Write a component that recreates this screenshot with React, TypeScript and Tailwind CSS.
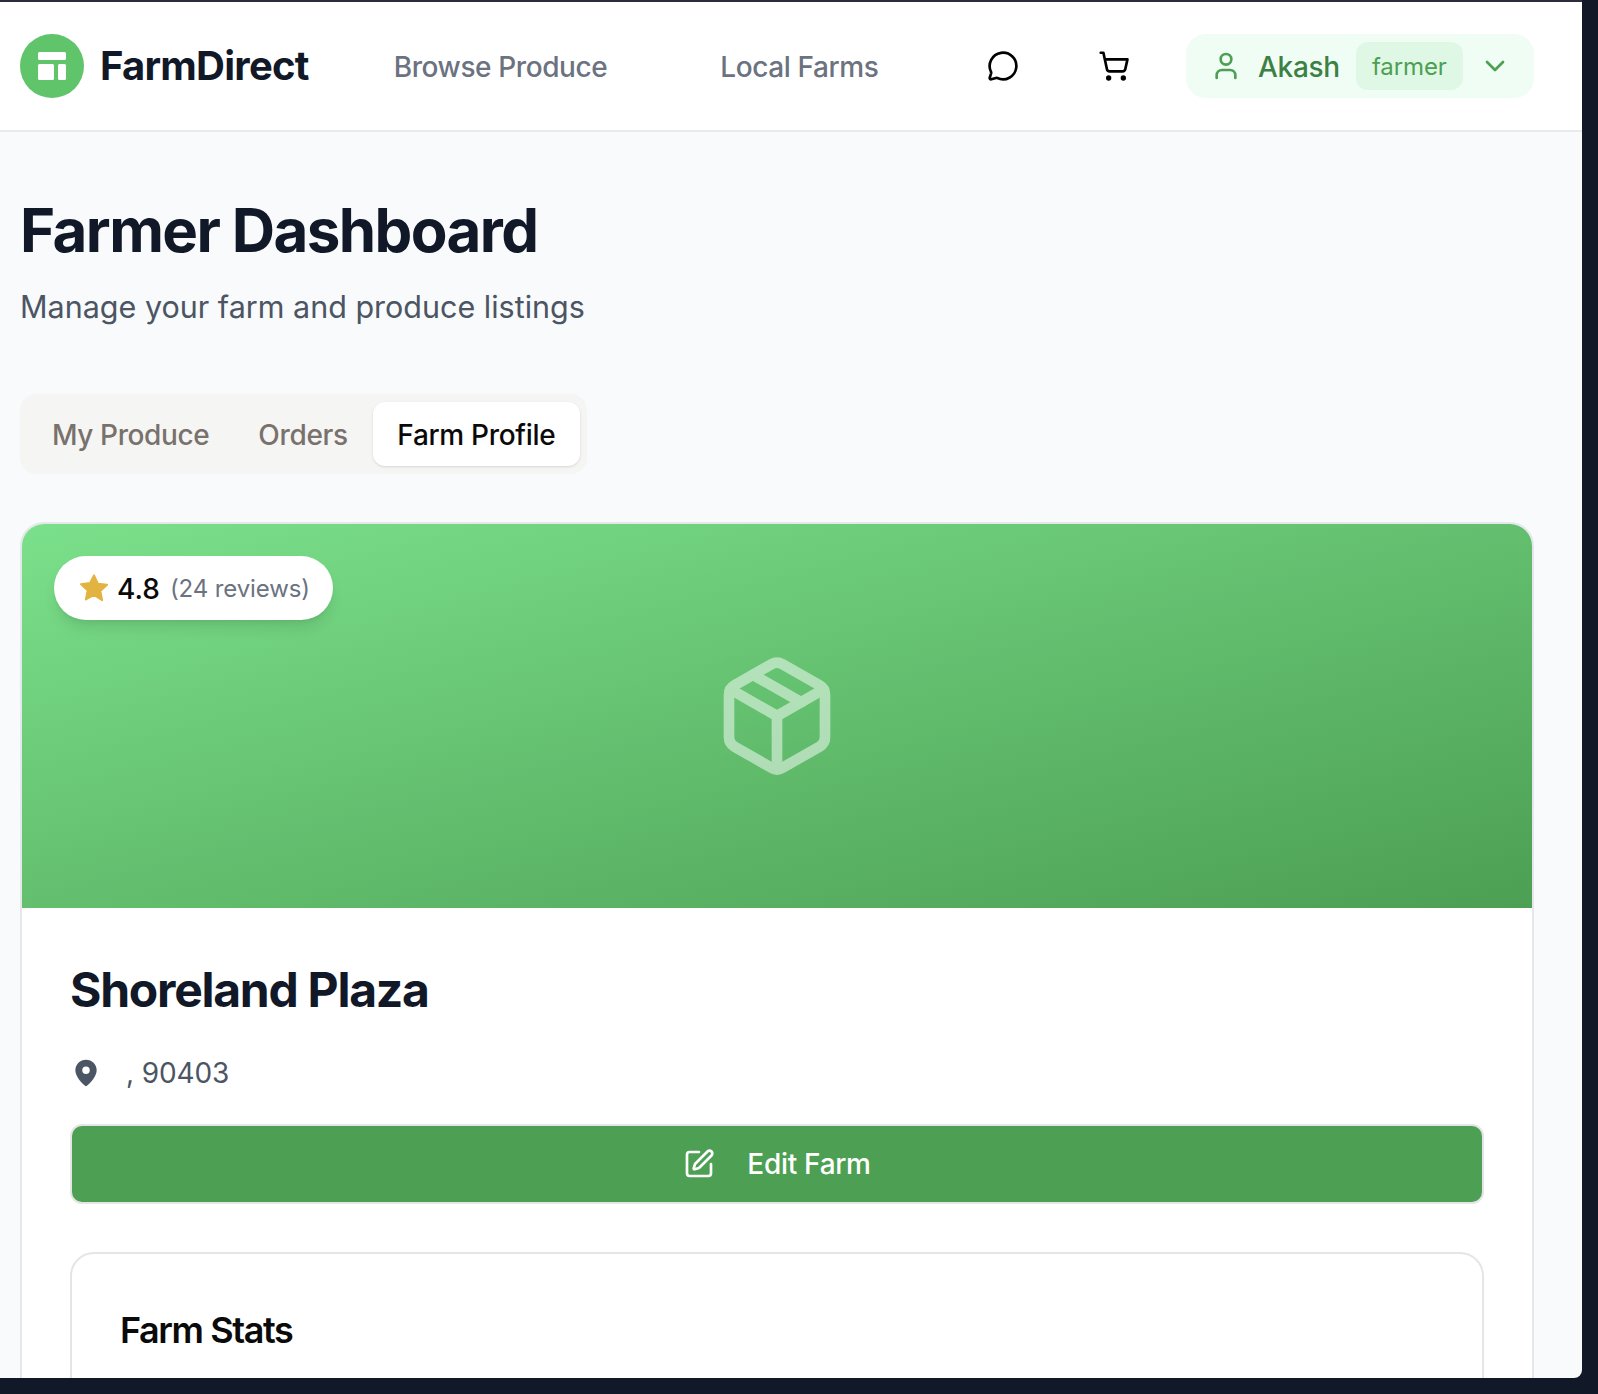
import React from 'react';
import { ChevronDown, MessageCircle, Package, ShoppingCart, SquarePen, User } from 'lucide-react';

const LogoMark = () => (
    <svg width="30" height="30" viewBox="0 0 30 30" fill="white">
        <rect x="1" y="1" width="28" height="8" rx="1.5" />
        <rect x="1" y="13" width="16" height="16" rx="1.5" />
        <rect x="21" y="13" width="8" height="16" rx="1.5" />
    </svg>
);

const Star = () => (
    <svg width="32" height="32" viewBox="0 0 24 24" fill="#e3b341" stroke="#e3b341" strokeWidth="1.5" strokeLinejoin="round">
        <path d="M12 2.5l2.9 6.3 6.9.8-5.1 4.7 1.4 6.8L12 17.2l-6.1 3.4 1.4-6.8-5.1-4.7 6.9-.8z" />
    </svg>
);

const Pin = () => (
    <svg width="32" height="32" viewBox="0 0 24 24">
        <path
            fill="#4b5563"
            fillRule="evenodd"
            d="M12 2a8 8 0 0 0-8 8c0 4.6 4.6 9.4 7.3 11.6a1.1 1.1 0 0 0 1.4 0C15.400 19.400 20 14.600 20 10a8 8 0 0 0-8-8zm0 5.200a2.800 2.800 0 1 1 0 5.600 2.800 2.800 0 0 1 0-5.600z"
        />
    </svg>
);

export default function App() {
    return (
        <div className="h-screen bg-[#111827] pr-[16px] pb-[16px] font-['Inter',sans-serif]">
            <div className="h-full overflow-hidden rounded-br-lg border-t-2 border-[#2b2d3d] bg-[#f9fafb]">
                {/* Top nav */}
                <header className="flex h-[130px] items-center border-b-2 border-[#e9eaec] bg-white pl-[20px] pr-[48px] whitespace-nowrap">
                    <div className="flex h-[64px] w-[64px] shrink-0 items-center justify-center rounded-full bg-[#5fc46a]">
                        <LogoMark />
                    </div>
                    <span className="ml-[16px] text-[40px] font-bold tracking-[-0.75px] text-[#111827]">FarmDirect</span>
                    <a className="ml-[85px] pt-[1px] text-[28px] font-medium tracking-[-0.4px] text-[#6b7280]">Browse Produce</a>
                    <a className="ml-[113px] pt-[1px] text-[28px] font-medium tracking-[-0.4px] text-[#6b7280]">Local Farms</a>
                    <MessageCircle className="ml-[109px] shrink-0 text-black" size={32} strokeWidth={2} />
                    <ShoppingCart className="ml-[79px] shrink-0 text-black" size={32} strokeWidth={2} />
                    <div className="ml-auto flex h-[64px] w-[348px] shrink-0 items-center rounded-[20px] bg-[#f0fdf4] pl-[24px]">
                        <User className="shrink-0 text-[#4c9f53]" size={32} strokeWidth={2} />
                        <span className="ml-[16px] pt-[1px] text-[28px] font-medium tracking-[-0.3px] text-[#3d8045]">Akash</span>
                        <span className="ml-[16px] flex h-[48px] w-[107px] items-center justify-center rounded-xl bg-[#dff8e5] pt-[1px] text-[24px] tracking-[-0.1px] text-[#4c9f53]">farmer</span>
                        <ChevronDown className="ml-[16px] shrink-0 text-[#4c9f53]" size={32} strokeWidth={2} />
                    </div>
                </header>

                <main className="pl-[20px] pr-[48px] pt-[62px]">
                    <h1 className="text-[60px] leading-[72px] font-bold tracking-[-1.6px] text-[#111827]">Farmer Dashboard</h1>
                    <p className="mt-[21px] text-[30.5px] leading-[40px] text-[#4b5563]">Manage your farm and produce listings</p>

                    {/* Tabs */}
                    <div className="mt-[67px] flex h-[80px] w-[567px] items-center rounded-2xl bg-[#f5f5f4] p-[8px] whitespace-nowrap">
                        <span className="ml-[24px] pt-[1px] text-[28px] font-medium tracking-[-0.4px] text-[#78716c]">My Produce</span>
                        <span className="ml-[49px] pt-[1px] text-[28px] font-medium tracking-[-0.3px] text-[#78716c]">Orders</span>
                        <span className="ml-[25px] flex h-[64px] w-[207px] shrink-0 items-center justify-center rounded-xl bg-white pt-[1px] text-[28px] font-medium tracking-[-0.3px] text-[#0c0a09] shadow-sm">Farm Profile</span>
                    </div>

                    {/* Farm card */}
                    <section className="mt-[48px] overflow-hidden rounded-3xl border-2 border-[#e5e7eb] bg-white">
                        <div className="relative flex h-[384px] items-center justify-center bg-gradient-to-br from-[#7be08b] to-[#4c9f53]">
                            <div className="absolute top-[32px] left-[32px] flex h-[64px] w-[279px] items-center rounded-full bg-white pl-[24px] shadow-lg">
                                <Star />
                                <span className="ml-[7px] pt-[1px] text-[28px] font-medium text-[#0a0a0a]">4.8</span>
                                <span className="ml-[10px] pt-[1px] text-[24px] tracking-[-0.1px] text-[#6b7280]">(24 reviews)</span>
                            </div>
                            <Package className="text-white opacity-50" size={128} strokeWidth={2} />
                        </div>
                        <div className="px-[48px] pt-[50px]">
                            <h2 className="text-[48px] leading-[64px] font-bold tracking-[-1.25px] text-[#111827]">Shoreland Plaza</h2>
                            <div className="mt-[31px] flex items-center text-[#4b5563]">
                                <Pin />
                                <span className="ml-[24px] text-[28px] leading-[40px] tracking-[-0.1px]">, 90403</span>
                            </div>
                            <button className="mt-[31px] flex h-[80px] w-full items-center justify-center rounded-xl border-2 border-[#e5e5e5] bg-[#4c9f53] text-[28px] font-medium tracking-[-0.3px] text-white">
                                <SquarePen size={32} strokeWidth={2} />
                                <span className="ml-[32px]">Edit Farm</span>
                            </button>
                            <div className="mt-[48px] h-[300px] rounded-3xl border-2 border-[#e5e5e5] bg-white px-[48px] pt-[52px]">
                                <h3 className="text-[36px] leading-[48px] font-semibold tracking-[-1.4px] text-[#0a0a0a]">Farm Stats</h3>
                            </div>
                        </div>
                    </section>
                </main>
            </div>
        </div>
    );
}
